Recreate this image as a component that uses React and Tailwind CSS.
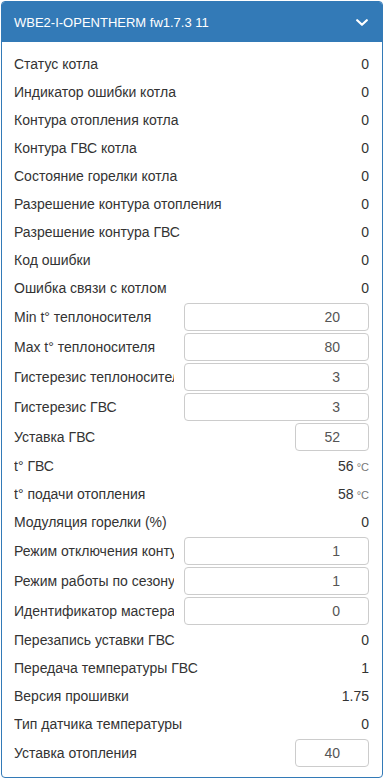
import React from "react";

const rows = [
  { l: "Статус котла", v: "0" },
  { l: "Индикатор ошибки котла", v: "0" },
  { l: "Контура отопления котла", v: "0" },
  { l: "Контура ГВС котла", v: "0" },
  { l: "Состояние горелки котла", v: "0" },
  { l: "Разрешение контура отопления", v: "0" },
  { l: "Разрешение контура ГВС", v: "0" },
  { l: "Код ошибки", v: "0" },
  { l: "Ошибка связи с котлом", v: "0" },
  { l: "Min t° теплоносителя", i: "20" },
  { l: "Max t° теплоносителя", i: "80" },
  { l: "Гистерезис теплоносителя", i: "3" },
  { l: "Гистерезис ГВС", i: "3" },
  { l: "Уставка ГВС", s: "52" },
  { l: "t° ГВС", v: "56", u: "°C" },
  { l: "t° подачи отопления", v: "58", u: "°C" },
  { l: "Модуляция горелки (%)", v: "0" },
  { l: "Режим отключения контура отопления", i: "1" },
  { l: "Режим работы по сезону", i: "1" },
  { l: "Идентификатор мастера", i: "0" },
  { l: "Перезапись уставки ГВС", v: "0" },
  { l: "Передача температуры ГВС", v: "1" },
  { l: "Версия прошивки", v: "1.75" },
  { l: "Тип датчика температуры", v: "0" },
  { l: "Уставка отопления", s: "40" },
];

function Row({ r }) {
  if (r.i || r.s) {
    return (
      <div className="flex h-[30px] items-center">
        <div className="flex-1 min-w-0 overflow-hidden whitespace-nowrap leading-[28px]">{r.l}</div>
        <div
          className={
            (r.i ? "w-[185px] ml-[10px]" : "w-[74px] ml-[10px]") +
            " h-[28px] shrink-0 rounded-[4px] border border-[#cccccc] bg-white text-right pr-[28px] leading-[26px] text-[#555555]"
          }
        >
          {r.i || r.s}
        </div>
      </div>
    );
  }
  return (
    <div className="flex h-[28px] items-center leading-[28px]">
      <div className="flex-1 min-w-0 overflow-hidden whitespace-nowrap">{r.l}</div>
      <div className="shrink-0 whitespace-nowrap">
        {r.v}
        {r.u && <span className="ml-[3px] text-[11px] text-[#777777]">{r.u}</span>}
      </div>
    </div>
  );
}

export default function App() {
  return (
    <div
      className="bg-white w-[384px] h-[779px] pt-px pl-px"
      style={{ fontFamily: '"Liberation Sans", Arial, sans-serif' }}
    >
      <div className="w-[382px] h-[777px] border border-[#337ab7] rounded-[4px] overflow-hidden bg-white text-[14px] text-[#333333]">
        <div className="h-[40px] bg-[#337ab7] flex items-center pl-[12px] pr-[13px] text-white">
          <div className="flex-1 text-[13px] leading-none pt-[1px]">WBE2-I-OPENTHERM fw1.7.3 11</div>
          <svg width="12" height="8" viewBox="0 0 12 8" className="mr-[1px] mt-[1px]">
            <polyline points="1.2,1.2 6,5.8 10.8,1.2" fill="none" stroke="white" strokeWidth="2.2" strokeLinecap="round" strokeLinejoin="round" />
          </svg>
        </div>
        <div className="pt-[8px] pl-[12px] pr-[13px]">
          {rows.map((r, k) => (
            <Row key={k} r={r} />
          ))}
        </div>
      </div>
    </div>
  );
}
